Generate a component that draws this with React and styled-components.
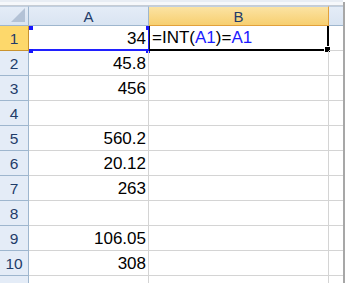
import React from 'react';
import styled, { createGlobalStyle, css } from 'styled-components';

const GlobalStyle = createGlobalStyle`
  html, body {
    margin: 0;
    padding: 0;
    background: #ffffff;
  }
`;

const values = ['34', '45.8', '456', '', '560.2', '20.12', '263', '', '106.05', '308'];

const Sheet = styled.div`
  width: 343px;
  height: 283px;
  overflow: hidden;
  background: #ffffff;
  box-shadow: 2px 2px 0 #a7a7a7;
  font-family: 'Liberation Sans', Arial, sans-serif;
`;

const TopStrip = styled.div`
  height: 3px;
  border-top: 2px solid #e8edf4;
  border-bottom: 1px solid #c6ccd4;
  background: #f6f8fb;
`;

const Grid = styled.div`
  display: grid;
  grid-template-columns: 29px 120px 180px 15px;
  grid-template-rows: 20px repeat(11, 25px);
`;

const HeadCell = styled.div`
  box-sizing: border-box;
  display: flex;
  align-items: center;
  justify-content: center;
  font-size: 14px;
  color: #1f3c69;
  border-right: 1px solid #9eb6ce;
  border-bottom: 1px solid #9eb6ce;
  background: linear-gradient(#e4ecf7, #d9e4f2);
  ${(p) =>
    p.$active &&
    css`
      background: linear-gradient(#fbe3a3, #f7cf70);
      border-right-color: #e2a13b;
      border-bottom-color: #e2a13b;
    `}
`;

const Corner = styled(HeadCell)`
  position: relative;
  border-top: 1px solid #c1cfe0;
`;

const ColHead = styled(HeadCell)`
  border-top: 1px solid #c1cfe0;
  padding-top: 1px;
  font-size: 15px;
`;

const RowHead = styled(HeadCell)`
  font-size: 15.5px;
  padding-top: 1px;
  background: #e4ecf7;
  ${(p) =>
    p.$active &&
    css`
      background: #fdd86b;
      border-right-color: #c9932f;
      border-bottom-color: #c9932f;
    `}
`;

const Cell = styled.div`
  box-sizing: border-box;
  position: relative;
  display: flex;
  align-items: center;
  justify-content: ${(p) => (p.$left ? 'flex-start' : 'flex-end')};
  padding: 1px 2px 0 3px;
  font-size: 17px;
  color: #000000;
  border-right: 1px solid #d4d4d4;
  border-bottom: 1px solid #d4d4d4;
  white-space: nowrap;
`;

const ActiveCell = styled(Cell)`
  border-right: 2px solid #000000;
  border-bottom: 2px solid #000000;
  border-left: 1px solid #1b1b1b;
  padding-left: 2px;
`;

const Ref = styled.span`
  color: #1a1aff;
`;

const Highlight = styled.div`
  position: absolute;
  left: 0;
  top: 0;
  right: -1px;
  bottom: -1px;
  border-right: 1px solid #2020ff;
  border-bottom: 2px solid #2020ff;
  pointer-events: none;
`;

const Handle = styled.span`
  position: absolute;
  width: 4px;
  height: 4px;
  background: #1616ff;
  ${(p) => p.$pos}
`;

const FillHandle = styled.span`
  position: absolute;
  right: -4px;
  bottom: -4px;
  width: 5px;
  height: 5px;
  background: #000000;
  border: 1px solid #ffffff;
`;

const Triangle = () => (
  <svg width="14" height="14" viewBox="0 0 14 14" style={{ position: 'absolute', right: 3, bottom: 3 }}>
    <polygon points="14,0 14,14 0,14" fill="#b3c2d6" />
  </svg>
);

export default function App() {
  return (
    <>
      <GlobalStyle />
      <Sheet>
        <TopStrip />
        <Grid>
          <Corner>
            <Triangle />
          </Corner>
          <ColHead>A</ColHead>
          <ColHead $active>B</ColHead>
          <ColHead />
          {values.map((v, i) => (
            <React.Fragment key={i}>
              <RowHead $active={i === 0}>{i + 1}</RowHead>
              {i === 0 ? (
                <>
                  <Cell>
                    {v}
                    <Highlight />
                    <Handle $pos="left: 0; top: 0;" />
                    <Handle $pos="right: -2px; top: 0;" />
                    <Handle $pos="left: 0; bottom: -3px;" />
                    <Handle $pos="right: -2px; bottom: -3px;" />
                  </Cell>
                  <ActiveCell $left>
                    =INT(<Ref>A1</Ref>)=<Ref>A1</Ref>
                    <FillHandle />
                  </ActiveCell>
                </>
              ) : (
                <>
                  <Cell>{v}</Cell>
                  <Cell />
                </>
              )}
              <Cell />
            </React.Fragment>
          ))}
          <RowHead />
          <Cell />
          <Cell />
          <Cell />
        </Grid>
      </Sheet>
    </>
  );
}
